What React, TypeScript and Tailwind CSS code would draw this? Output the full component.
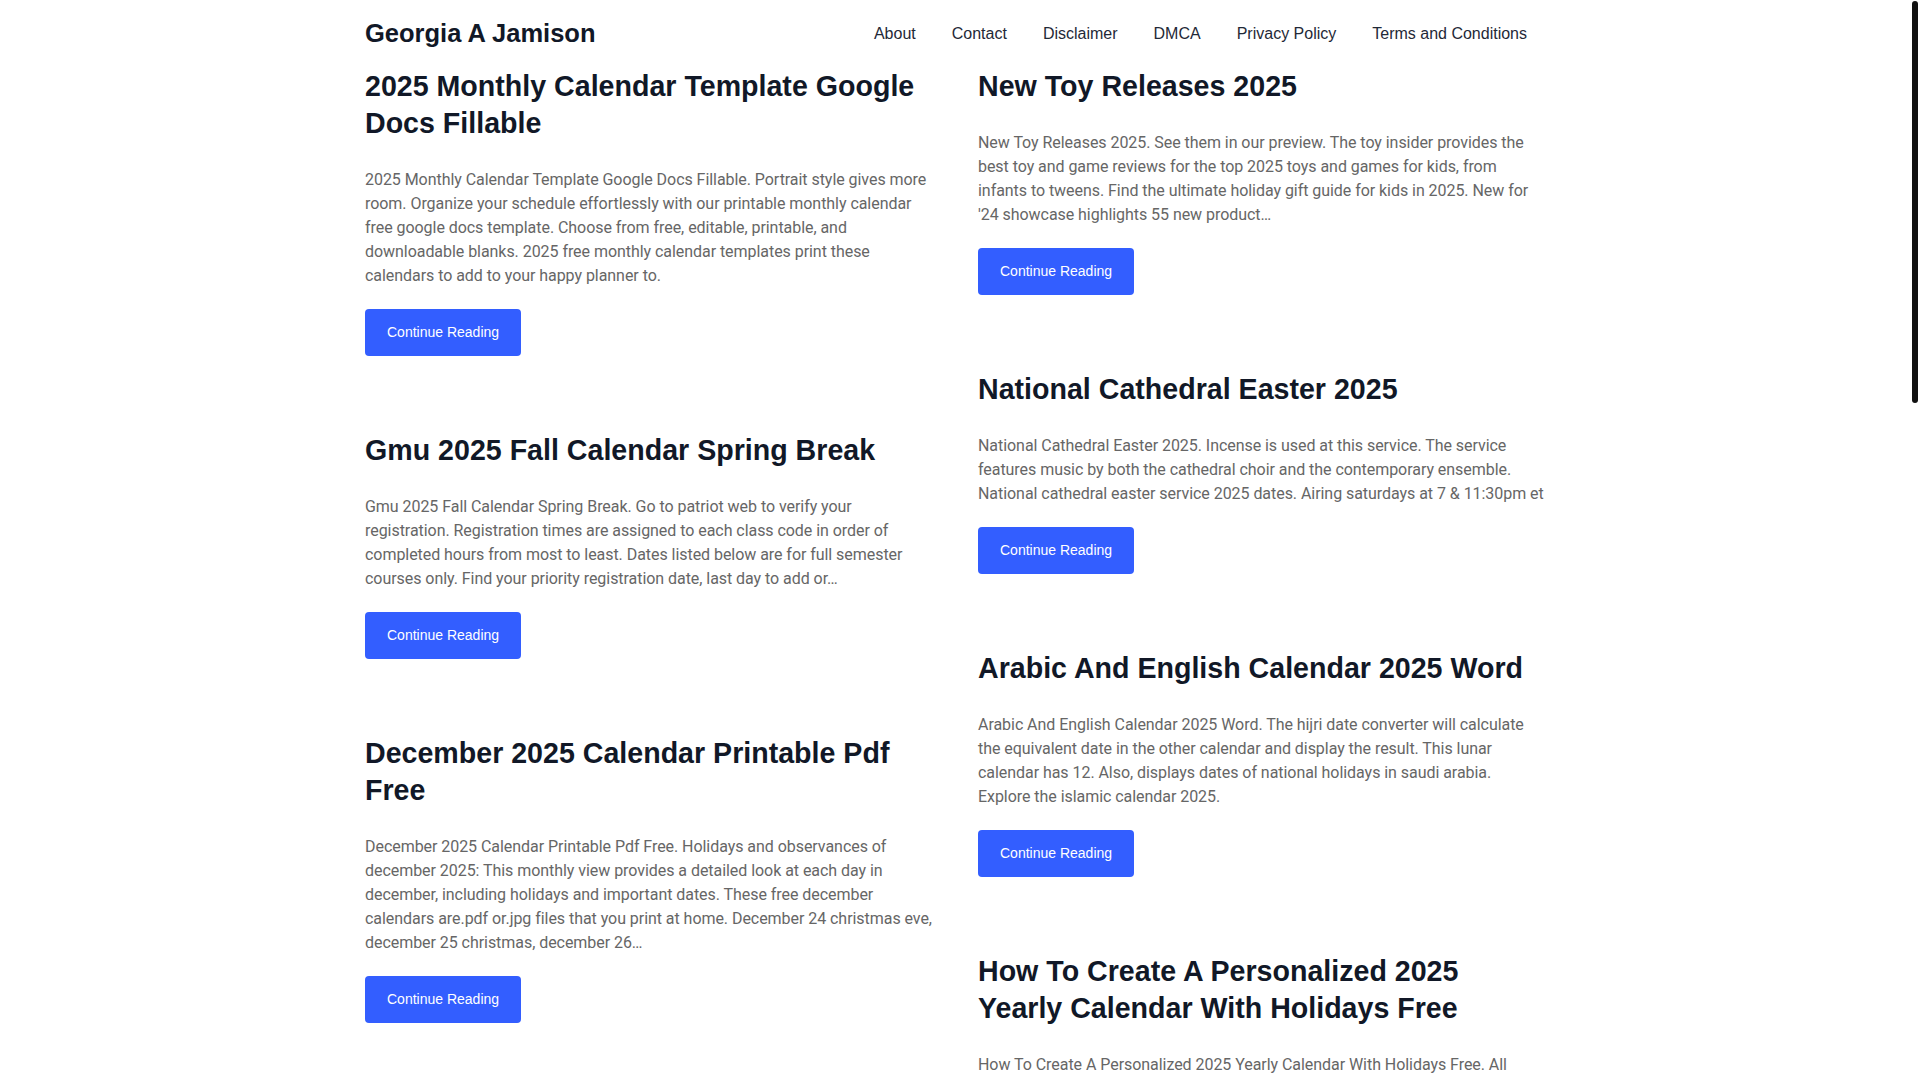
import React from "react";

type Post = { title: string; body: string };

const leftPosts: Post[] = [
  {
    title: "2025 Monthly Calendar Template Google Docs Fillable",
    body: "2025 Monthly Calendar Template Google Docs Fillable. Portrait style gives more room. Organize your schedule effortlessly with our printable monthly calendar free google docs template. Choose from free, editable, printable, and downloadable blanks. 2025 free monthly calendar templates print these calendars to add to your happy planner to.",
  },
  {
    title: "Gmu 2025 Fall Calendar Spring Break",
    body: "Gmu 2025 Fall Calendar Spring Break. Go to patriot web to verify your registration. Registration times are assigned to each class code in order of completed hours from most to least. Dates listed below are for full semester courses only. Find your priority registration date, last day to add or…",
  },
  {
    title: "December 2025 Calendar Printable Pdf Free",
    body: "December 2025 Calendar Printable Pdf Free. Holidays and observances of december 2025: This monthly view provides a detailed look at each day in december, including holidays and important dates. These free december calendars are.pdf or.jpg files that you print at home. December 24 christmas eve, december 25 christmas, december 26…",
  },
  {
    title: "Uf Academic Calendar 2025 Spring",
    body: "Uf Academic Calendar 2025 Spring. The academic calendar lists important dates for the semester, including the first day of classes, drop/add deadlines, holidays and final exam dates. Check the registrar for the latest updates.",
  },
  {
    title: "2025 Calendar With Holidays Printable Free Word",
    body: "2025 Calendar With Holidays Printable Free Word. Download a yearly calendar with federal holidays in word format. Each template is fully editable, so you can add your own events, notes and reminders before printing.",
  },
  {
    title: "Easter 2025 Date Uk Calendar",
    body: "Easter 2025 Date Uk Calendar. Easter sunday falls on 20 april 2025 in the united kingdom. Good friday is on 18 april and easter monday is a bank holiday in england, wales and northern ireland.",
  },
  {
    title: "Nfl Schedule 2025 Week 1 Printable",
    body: "Nfl Schedule 2025 Week 1 Printable. View the full week one schedule with kickoff times, networks and matchups. Print it out and keep track of every game of the opening weekend.",
  },
];

const rightPosts: Post[] = [
  {
    title: "New Toy Releases 2025",
    body: "New Toy Releases 2025. See them in our preview. The toy insider provides the best toy and game reviews for the top 2025 toys and games for kids, from infants to tweens. Find the ultimate holiday gift guide for kids in 2025. New for '24 showcase highlights 55 new product…",
  },
  {
    title: "National Cathedral Easter 2025",
    body: "National Cathedral Easter 2025. Incense is used at this service. The service features music by both the cathedral choir and the contemporary ensemble. National cathedral easter service 2025 dates. Airing saturdays at 7 & 11:30pm et",
  },
  {
    title: "Arabic And English Calendar 2025 Word",
    body: "Arabic And English Calendar 2025 Word. The hijri date converter will calculate the equivalent date in the other calendar and display the result. This lunar calendar has 12. Also, displays dates of national holidays in saudi arabia. Explore the islamic calendar 2025.",
  },
  {
    title: "How To Create A Personalized 2025 Yearly Calendar With Holidays Free",
    body: "How To Create A Personalized 2025 Yearly Calendar With Holidays Free. All templates are free to download and easy to customize. Add your own photos, birthdays and special events, then print at home or share digitally.",
  },
  {
    title: "Lunar Calendar 2025 Chinese New Year",
    body: "Lunar Calendar 2025 Chinese New Year. The year of the snake begins on january 29, 2025. Find lucky days, festival dates and traditional observances throughout the lunar year.",
  },
  {
    title: "Ramadan 2025 Calendar Timetable",
    body: "Ramadan 2025 Calendar Timetable. Suhoor and iftar times for every day of the holy month. Timings vary by city, so choose your location for accurate prayer times.",
  },
  {
    title: "Tax Deadline 2025 Calendar Irs",
    body: "Tax Deadline 2025 Calendar Irs. Mark the key filing dates for individuals and businesses, including estimated payments, extensions and the april 15 deadline.",
  },
];

function PostCard({ post }: { post: Post }) {
  return (
    <article className="flex flex-col items-start">
      <h2 className="text-[28.6px] leading-[37px] font-bold text-[#111827] mb-[26px] font-['Liberation_Sans',Arial,sans-serif]">
        {post.title}
      </h2>
      <p className="text-[16px] leading-[24px] tracking-[-0.05px] text-[#666666] mb-[21px] font-['Roboto',sans-serif]">
        {post.body}
      </p>
      <a
        href="#"
        className="h-[47px] px-[22px] flex items-center rounded-[4px] bg-[#335eff] text-white text-[14px] font-['Liberation_Sans',Arial,sans-serif]"
      >
        Continue Reading
      </a>
    </article>
  );
}

export default function App() {
  const nav = ["About", "Contact", "Disclaimer", "DMCA", "Privacy Policy", "Terms and Conditions"];
  return (
    <div className="bg-white min-h-screen">
      <div className="w-[1180px] mx-auto pr-[10px] box-content font-['Liberation_Sans',Arial,sans-serif]">
        <header className="h-[68px] flex items-center justify-between">
          <a href="#" className="text-[25.5px] font-bold text-[#111827] leading-none">
            Georgia A Jamison
          </a>
          <nav className="flex items-center">
            {nav.map((n) => (
              <a key={n} href="#" className="px-[18px] text-[16px] text-[#1f2937]">
                {n}
              </a>
            ))}
          </nav>
        </header>
        <main className="grid grid-cols-2 gap-x-[46px] pb-[140px]">
          <div className="flex flex-col gap-[76px]">
            {leftPosts.map((p) => (
              <PostCard key={p.title} post={p} />
            ))}
          </div>
          <div className="flex flex-col gap-[76px]">
            {rightPosts.map((p) => (
              <PostCard key={p.title} post={p} />
            ))}
          </div>
        </main>
      </div>
      <div className="fixed right-[2px] top-[1px] w-[6px] h-[402px] rounded-full bg-[#111111]" />
    </div>
  );
}
